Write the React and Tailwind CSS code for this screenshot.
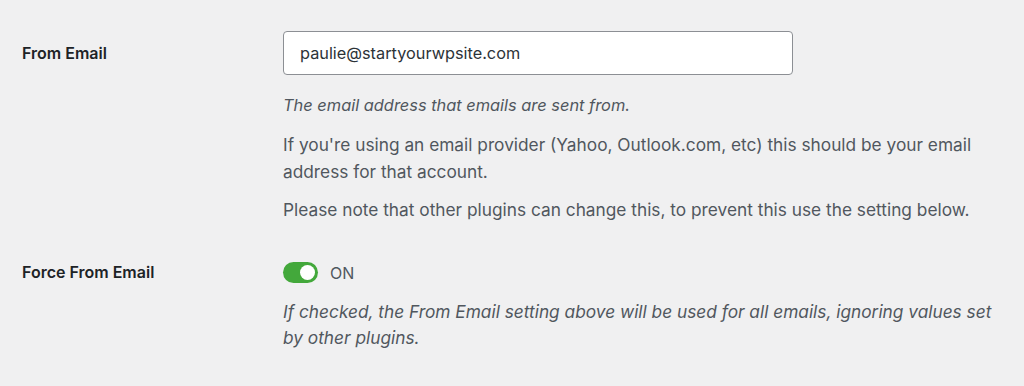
export default function App() {
  return (
    <div
      className="min-h-[386px] w-full bg-[#f0f0f1] text-[#1d2327]"
      style={{ fontFamily: 'Inter, "Noto Sans", sans-serif' }}
    >
      <div className="pl-[22px] pt-[31px]">
        {/* From Email */}
        <div className="flex">
          <div className="w-[261px] shrink-0 pt-[12px] text-[16px] font-semibold leading-5">From Email</div>
          <div className="w-[716px] text-[17.3px] text-[#50575e]">
            <input
              type="text"
              defaultValue="paulie@startyourwpsite.com"
              className="h-[44px] w-[510px] rounded-[4px] border border-[#8c8f94] bg-white px-4 text-[16.3px] text-[#2c3338] outline-none"
            />
            <p className="mt-[17px] text-[16.4px] italic leading-[26px]">The email address that emails are sent from.</p>
            <p className="mt-[13px] leading-[27px]">
              If you're using an email provider (Yahoo, Outlook.com, etc) this should be your email address for that account.
            </p>
            <p className="mt-[11px] leading-[27px]">
              Please note that other plugins can change this, to prevent this use the setting below.
            </p>
          </div>
        </div>

        {/* Force From Email */}
        <div className="mt-[39px] flex">
          <div className="w-[261px] shrink-0 text-[16px] font-semibold leading-5">Force From Email</div>
          <div className="w-[716px] text-[17.3px] text-[#50575e]">
            <div className="flex items-center gap-3">
              <button
                type="button"
                className="relative h-[21px] w-[35px] rounded-full bg-[#43a83b]"
              >
                <span className="absolute right-[3px] top-[3px] h-[15px] w-[15px] rounded-full bg-white" />
              </button>
              <span className="text-[16px] leading-5">ON</span>
            </div>
            <p className="mt-[16px] italic leading-[26px]">
              If checked, the From Email setting above will be used for all emails, ignoring values set by other plugins.
            </p>
          </div>
        </div>
      </div>
    </div>
  )
}
